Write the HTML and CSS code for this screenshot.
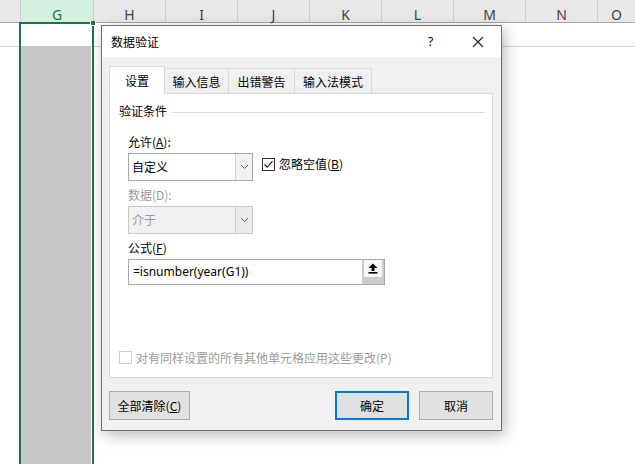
FILE: index.html
```html
<!DOCTYPE html>
<html lang="zh-CN">
<head>
<meta charset="utf-8">
<title>数据验证</title>
<link rel="stylesheet" href="styles.css">
</head>
<body>
<div class="sheet">
  <div class="col-head">
    <div class="corner"></div>
    <div class="ch ch-sel">G</div>
    <div class="ch">H</div>
    <div class="ch">I</div>
    <div class="ch">J</div>
    <div class="ch">K</div>
    <div class="ch">L</div>
    <div class="ch">M</div>
    <div class="ch">N</div>
    <div class="ch ch-last">O</div>
  </div>
  <div class="grid">
    <div class="gutter"><div class="row1"></div></div>
    <div class="sel-col">
      <div class="active-cell"></div>
      <div class="sel-fill"></div>
      <div class="handle"></div>
    </div>
    <div class="rest"><div class="row1"></div></div>
  </div>

  <div class="dialog">
    <div class="titlebar">
      <span class="title">数据验证</span>
      <span class="help">?</span>
      <svg class="close" width="12" height="12" viewBox="0 0 12 12"><path d="M1 1 L11 11 M11 1 L1 11" stroke="#222" stroke-width="1.1" fill="none"/></svg>
    </div>
    <div class="dbody">
      <div class="tabs">
        <div class="tab tab-on">设置</div>
        <div class="tab tab-w1">输入信息</div>
        <div class="tab tab-w2">出错警告</div>
        <div class="tab tab-w3">输入法模式</div>
      </div>
      <div class="panel">
        <div class="group-head"><span>验证条件</span><i class="rule"></i></div>
        <div class="lbl lbl-first">允许(<u>A</u>):</div>
        <div class="row-allow">
          <div class="combo">
            <span class="combo-text">自定义</span>
            <span class="combo-btn"><svg width="9" height="6" viewBox="0 0 9 6"><path d="M1 1 L4.5 4.5 L8 1" stroke="#666" stroke-width="1" fill="none"/></svg></span>
          </div>
          <label class="chk">
            <span class="box"><svg width="11" height="11" viewBox="0 0 11 11"><path d="M1.5 5.5 L4.2 8.2 L9.5 2.2" stroke="#222" stroke-width="1.2" fill="none"/></svg></span>
            <span>忽略空值(<u>B</u>)</span>
          </label>
        </div>
        <div class="lbl lbl-dis">数据(D):</div>
        <div class="combo combo-dis">
          <span class="combo-text">介于</span>
          <span class="combo-btn"><svg width="9" height="6" viewBox="0 0 9 6"><path d="M1 1 L4.5 4.5 L8 1" stroke="#666" stroke-width="1" fill="none"/></svg></span>
        </div>
        <div class="lbl">公式(<u>F</u>)</div>
        <div class="formula">
          <span class="formula-text">=isnumber(year(G1))</span>
          <span class="ref-btn"><span class="ref-inner"><svg width="10" height="11" viewBox="0 0 10 11"><path d="M5 0.5 L9.5 5 L6.5 5 L6.5 8 L3.5 8 L3.5 5 L0.5 5 Z" fill="#000"/><rect x="0.5" y="9" width="9" height="1.6" fill="#000"/></svg></span></span>
        </div>
        <div class="apply-all">
          <span class="box box-dis"></span>
          <span>对有同样设置的所有其他单元格应用这些更改(P)</span>
        </div>
      </div>
      <div class="buttons">
        <button class="btn btn-clear">全部清除(<u>C</u>)</button>
        <span class="spacer"></span>
        <button class="btn btn-ok">确定</button>
        <button class="btn">取消</button>
      </div>
    </div>
  </div>
</div>
</body>
</html>
```

FILE: styles.css
```css
* { box-sizing: border-box; }
html, body { margin: 0; padding: 0; }
body {
  width: 635px;
  height: 464px;
  overflow: hidden;
  background: #fff;
  font-family: "Noto Sans CJK SC", "Noto Sans", sans-serif;
}
.sheet { position: relative; width: 635px; height: 464px; }

/* column header */
.col-head {
  display: flex;
  height: 23px;
  background: #e8e8e8;
  border-bottom: 1px solid #a8a8a8;
  font-family: "Noto Sans", "Liberation Sans", sans-serif;
  font-size: 14px;
  color: #444;
}
.corner { width: 20px; }
.ch {
  width: 72px;
  border-left: 1px solid #cdcdcd;
  text-align: center;
  line-height: 23px;
  padding-top: 3px;
}
.ch-sel {
  width: 73px;
  background: #d3f0e0;
  color: #217346;
  border-bottom: 2px solid #217346;
  height: 24px;
  margin-bottom: -1px;
}
.ch-last { flex: 1; }

/* grid */
.grid { display: flex; height: 441px; }
.gutter { width: 19px; }
.row1 { height: 24px; border-bottom: 1px solid #d4d4d4; }
.sel-col {
  position: relative;
  width: 75px;
  display: flex;
  flex-direction: column;
  border-left: 2px solid #217346;
  border-right: 2px solid #217346;
  border-top: 2px solid #217346;
  margin-top: -1px;
}
.active-cell { height: 22px; background: #fff; }
.sel-fill { flex: 1; background: #c6c6c6; border-right: 1px solid #fff; }
.handle {
  position: absolute;
  right: -4px;
  top: -3px;
  width: 6px;
  height: 5px;
  background: #217346;
  border: 1px solid #fff;
  border-top: none;
}
.rest { flex: 1; }

/* dialog */
.dialog {
  position: absolute;
  left: 101px;
  top: 25px;
  width: 401px;
  height: 406px;
  border: 1px solid #6f6f6f;
  background: #f0f0f0;
  box-shadow: 3px 4px 14px rgba(0,0,0,0.28);
  display: flex;
  flex-direction: column;
  font-size: 12px;
  color: #000;
}
.titlebar {
  height: 31px;
  background: #fff;
  display: flex;
  align-items: center;
  padding-left: 9px;
  position: relative;
}
.title { font-size: 12px; }
.help {
  position: absolute;
  left: 326px;
  top: 7px;
  font-family: "Noto Sans", sans-serif;
  font-size: 12px;
}
.close { position: absolute; left: 370px; top: 10px; }

.dbody {
  flex: 1;
  padding: 9px 8px 10px 7px;
  display: flex;
  flex-direction: column;
}
.tabs { display: flex; align-items: flex-end; height: 27px; position: relative; z-index: 1; }
.tab {
  height: 25px;
  border: 1px solid #d9d9d9;
  border-bottom: none;
  background: #f0f0f0;
  margin-left: -1px;
  display: flex;
  align-items: center;
  justify-content: center;
  font-size: 12px;
}
.tab-on {
  width: 56px;
  height: 28px;
  margin-left: 0;
  margin-bottom: -1px;
  background: #fff;
  border-color: #d9d9d9;
}
.tab-w1 { width: 65px; }
.tab-w2 { width: 67px; }
.tab-w3 { width: 78px; }

.panel {
  height: 285px;
  background: #fff;
  border: 1px solid #d9d9d9;
  display: flex;
  flex-direction: column;
  padding: 0 0 12px 18px;
}
.group-head {
  display: flex;
  align-items: center;
  margin: 9px 7px 0 -9px;
  height: 16px;
  line-height: 16px;
}
.rule { flex: 1; height: 1px; background: #dcdcdc; margin-left: 5px; margin-top: 2px; }
.lbl { height: 16px; line-height: 16px; margin-top: 6px; }
.lbl-first { margin-top: 15px; }
.lbl-dis { color: #9a9a9a; }

.row-allow { display: flex; align-items: flex-start; margin-top: 3px; }
.combo {
  width: 125px;
  height: 28px;
  border: 1px solid #a6a6a6;
  background: #fff;
  display: flex;
  margin-top: 3px;
}
.row-allow .combo { margin-top: 0; }
.combo-text { flex: 1; line-height: 26px; padding-left: 3px; }
.combo-btn {
  width: 17px;
  border-left: 1px solid #cfcfcf;
  background: #f2f2f2;
  display: flex;
  align-items: center;
  justify-content: center;
}
.combo-dis { background: #f0f0f0; border-color: #c8c8c8; }
.combo-dis .combo-text { color: #9a9a9a; }
.combo-dis .combo-btn { background: #e9e9e9; border-left-color: #cdcdcd; }

.chk { display: flex; align-items: center; margin-left: 9px; margin-top: 3px; line-height: 16px; }
.box {
  width: 13px;
  height: 13px;
  border: 1px solid #333;
  background: #fff;
  margin-right: 4px;
  display: flex;
  align-items: center;
  justify-content: center;
}
.box-dis { border-color: #cccccc; }

.formula {
  width: 257px;
  height: 26px;
  border: 1px solid #a6a6a6;
  margin-top: 3px;
  display: flex;
}
.formula-text {
  flex: 1;
  line-height: 24px;
  padding-left: 4px;
  font-family: "Noto Sans", sans-serif;
  font-size: 12px;
}
.ref-btn {
  width: 22px;
  background: #cccccc;
  padding: 0 2px 0 2px;
}
.ref-inner {
  display: flex;
  align-items: center;
  justify-content: center;
  height: 17px;
  background: #f7f7f7;
}

.apply-all {
  margin-top: auto;
  margin-left: -9px;
  display: flex;
  align-items: center;
  color: #9a9a9a;
  height: 16px;
}

.buttons { display: flex; margin-top: 13px; height: 29px; }
.spacer { flex: 1; }
.btn {
  height: 29px;
  width: 74px;
  background: #e1e1e1;
  border: 1px solid #adadad;
  font-family: "Noto Sans CJK SC", sans-serif;
  font-size: 12px;
  color: #000;
  padding: 0;
  margin: 0;
}
.btn-clear { width: 81px; }
.btn-ok { border: 2px solid #0078d7; margin-right: 10px; }
```
